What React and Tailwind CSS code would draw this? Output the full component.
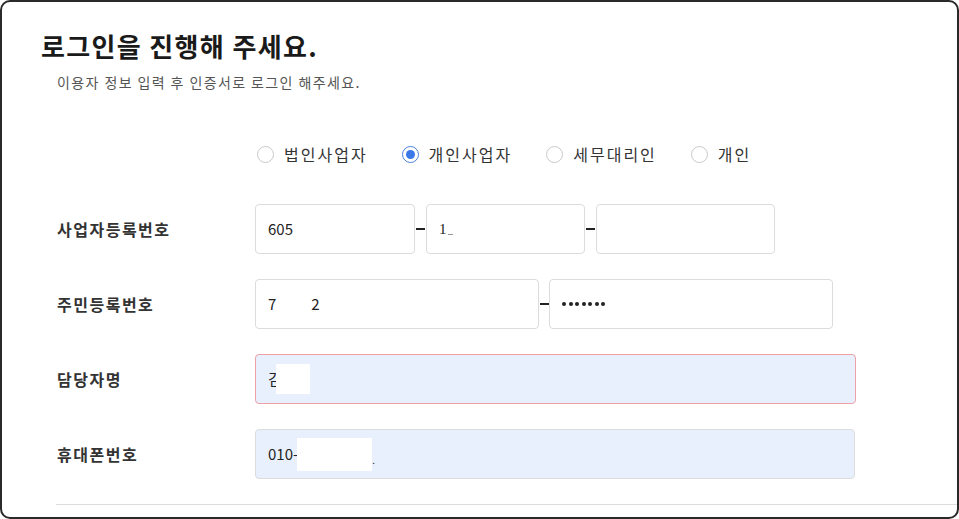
import React, { useState } from "react";

const FONT = { fontFamily: '"Noto Sans CJK KR", "Noto Sans", sans-serif' };

const TYPES = ["법인사업자", "개인사업자", "세무대리인", "개인"];

function Radio({ label, checked, onClick }) {
  return (
    <button className="flex items-center gap-[10px]" onClick={onClick}>
      {checked ? (
        <span className="flex h-[17px] w-[17px] items-center justify-center rounded-full border-[1.5px] border-[#4a7fd8] bg-white">
          <span className="h-[9px] w-[9px] rounded-full bg-[#3b78e7]" />
        </span>
      ) : (
        <span className="h-[17px] w-[17px] rounded-full border-[1.5px] border-[#c9c9c9] bg-white" />
      )}
      <span className="text-[16px] leading-[24px] tracking-[2px] text-[#333]">{label}</span>
    </button>
  );
}

function Box({ className = "", children }) {
  return (
    <div
      className={`flex h-[50px] items-center rounded-[4px] border border-[#dcdcdc] px-[12px] text-[15px] text-[#222] ${className}`}
    >
      {children}
    </div>
  );
}

function Dash({ w = "w-[11px]" }) {
  return (
    <div className={`flex items-center justify-center ${w}`}>
      <span className="h-[2px] w-[9px] bg-[#222]" />
    </div>
  );
}

function Row({ label, children }) {
  return (
    <div className="flex items-center">
      <div className="w-[198px] text-[16px] font-semibold tracking-[1.5px] text-[#333]">{label}</div>
      <div className="flex">{children}</div>
    </div>
  );
}

export default function App() {
  const [type, setType] = useState("개인사업자");

  return (
    <div className="h-[519px] w-[959px] bg-white" style={FONT}>
      <div className="h-full w-full overflow-hidden rounded-[10px] border-2 border-[#2a2a2a] bg-white">
        <h1 className="ml-[39px] mt-[27px] text-[26px] font-bold leading-[34px] tracking-[1.35px] text-[#1a1a1a]">
          로그인을 진행해 주세요.
        </h1>
        <p className="ml-[55px] mt-[9px] text-[14px] leading-[20px] tracking-[1.4px] text-[#555]">
          이용자 정보 입력 후 인증서로 로그인 해주세요.
        </p>

        <div className="ml-[255px] mt-[50px] flex gap-[34px]">
          {TYPES.map((t) => (
            <Radio key={t} label={t} checked={type === t} onClick={() => setType(t)} />
          ))}
        </div>

        <div className="ml-[55px] mt-[38px] flex flex-col gap-[25px]">
          <Row label="사업자등록번호">
            <Box className="w-[160px]">605</Box>
            <Dash />
            <Box className="w-[159px]">
              <span style={{ fontFamily: '"Liberation Serif", serif' }}>1</span>
              <span className="ml-[1px] mt-[10px] h-[1px] w-[5px] bg-[#999]" />
            </Box>
            <Dash />
            <Box className="w-[179px]" />
          </Row>
          <Row label="주민등록번호">
            <Box className="w-[284px]">
              <span>7</span>
              <span className="ml-[35px]">2</span>
            </Box>
            <Dash w="w-[10px]" />
            <Box className="w-[284px]">
              <span className="flex gap-[2.5px]">
                {[0, 1, 2, 3, 4, 5, 6].map((i) => (
                  <span key={i} className="h-[4px] w-[4px] rounded-full bg-[#222]" />
                ))}
              </span>
            </Box>
          </Row>
          <Row label="담당자명">
            <Box className="w-[601px] border-[#eea0a6] bg-[#e8f0fe]">
              <span>김</span>
              <span className="-ml-[6px] h-[30px] w-[34px] bg-white" />
            </Box>
          </Row>
          <Row label="휴대폰번호">
            <Box className="w-[600px] border-[#dbe2ec] bg-[#e8f0fe]">
              <span>010-</span>
              <span className="-ml-[1px] h-[33px] w-[75px] bg-white" />
              <span className="mt-[10px] text-[10px]">.</span>
            </Box>
          </Row>
        </div>

        <div className="ml-[54px] mt-[25px] border-t border-[#dddddd]" />
      </div>
    </div>
  );
}
